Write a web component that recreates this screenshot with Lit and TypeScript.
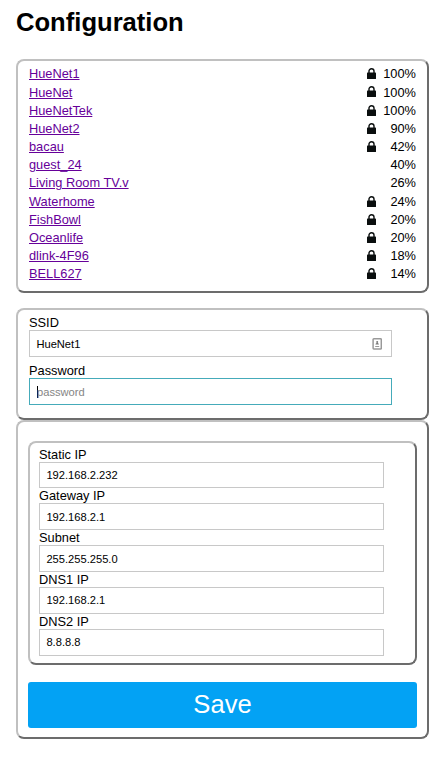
import { LitElement, html, css, svg, nothing } from "lit";
import { customElement } from "lit/decorators.js";

interface Network {
  ssid: string;
  quality: number;
  locked: boolean;
}

const networks: Network[] = [
  { ssid: "HueNet1", quality: 100, locked: true },
  { ssid: "HueNet", quality: 100, locked: true },
  { ssid: "HueNetTek", quality: 100, locked: true },
  { ssid: "HueNet2", quality: 90, locked: true },
  { ssid: "bacau", quality: 42, locked: true },
  { ssid: "guest_24", quality: 40, locked: false },
  { ssid: "Living Room TV.v", quality: 26, locked: false },
  { ssid: "Waterhome", quality: 24, locked: true },
  { ssid: "FishBowl", quality: 20, locked: true },
  { ssid: "Oceanlife", quality: 20, locked: true },
  { ssid: "dlink-4F96", quality: 18, locked: true },
  { ssid: "BELL627", quality: 14, locked: true },
];

const addresses: [string, string][] = [
  ["Static IP", "192.168.2.232"],
  ["Gateway IP", "192.168.2.1"],
  ["Subnet", "255.255.255.0"],
  ["DNS1 IP", "192.168.2.1"],
  ["DNS2 IP", "8.8.8.8"],
];

const lockIcon = html`<svg class="lock" viewBox="0 0 9 11" width="9" height="11">
  ${svg`<path d="M2 5.5V3.1a2.5 2.4 0 0 1 5 0V5.5" fill="none" stroke="#0a0e0e" stroke-width="1.4"/>
  <rect x="0" y="4.6" width="9" height="6.4" rx="0.6" fill="#0a0e0e"/>`}
</svg>`;

const contactIcon = html`<svg class="contact" viewBox="0 0 10 12" width="10" height="12">
  ${svg`<rect x="1.1" y="0.75" width="8.2" height="10.3" rx="0.7" fill="none" stroke="#999" stroke-width="1.5"/>
  <circle cx="5.2" cy="4" r="1" fill="#777"/>
  <path d="M3.5 6.6c0-2 3.4-2 3.4 0z" fill="#777"/>
  <path d="M3.2 8.5h4" stroke="#999" stroke-width="1"/>`}
</svg>`;

@customElement("app-root")
export class AppRoot extends LitElement {
  static styles = css`
    :host {
      display: block;
      box-sizing: border-box;
      min-height: 758px;
      padding: 7px 16px 19px;
      background: #fff;
      color: #000;
      font: 12.8px "Liberation Sans", Arial, sans-serif;
    }
    h1 {
      margin: 0 0 22px;
      font-size: 25.6px;
      line-height: 30px;
    }
    .panel {
      box-sizing: border-box;
      border: 2px solid;
      border-color: #c0c0c0 #6c6c6c #6c6c6c #c0c0c0;
      border-radius: 8px;
      width: 413px;
    }
    .networks {
      height: 234px;
      padding: 4.42px 11px 0;
      margin-bottom: 15px;
    }
    .row {
      display: grid;
      grid-template-columns: 1fr 9px 40px;
      align-items: center;
      height: 18.18px;
      line-height: 18.2px;
    }
    .row a {
      justify-self: start;
      color: #660099;
      text-decoration: underline;
    }
    .quality {
      grid-column: 3;
      text-align: right;
    }
    .lock {
      display: block;
      margin-bottom: 1.4px;
    }
    .wifi {
      height: 112px;
      padding: 5px 11px 0;
    }
    label {
      display: block;
      line-height: 15px;
    }
    .field {
      box-sizing: border-box;
      display: flex;
      align-items: center;
      justify-content: space-between;
      border: 1px solid #c8c8c8;
      padding: 0 9px 0 6.4px;
      font-size: 11.15px;
      color: #000;
    }
    .wifi .field {
      width: 363px;
      height: 27px;
      margin-bottom: 6px;
    }
    .wifi .focused {
      padding-left: 7px;
      border-color: #45abba;
      color: #858585;
    }
    .caret {
      width: 1px;
      height: 12px;
      margin-right: -1px;
      background: #000;
    }
    .focused span {
      flex: 1;
    }
    .setup {
      height: 319px;
      padding: 19px 10px 0;
    }
    .setup .addresses {
      width: 389px;
      height: 224px;
      padding: 3.5px 9px 0;
      margin-bottom: 17px;
    }
    .addresses .field {
      width: 345px;
      height: 26.85px;
    }
    button {
      display: block;
      width: 389px;
      height: 46px;
      border: 0;
      border-radius: 3px;
      padding: 0 0 2px;
      background: #03a2f4;
      color: #fff;
      font: 25.6px/44px "Liberation Sans", Arial, sans-serif;
    }
  `;

  render() {
    return html`
      <h1>Configuration</h1>
      <section class="panel networks">
        ${networks.map(
          (n) => html`<div class="row">
            <a>${n.ssid}</a>${n.locked ? lockIcon : nothing}<span class="quality">${n.quality}%</span>
          </div>`,
        )}
      </section>
      <section class="panel wifi">
        <label>SSID</label>
        <div class="field"><span>HueNet1</span>${contactIcon}</div>
        <label>Password</label>
        <div class="field focused"><i class="caret"></i><span>password</span></div>
      </section>
      <section class="panel setup">
        <div class="panel addresses">
          ${addresses.map(
            ([name, value]) => html`<label>${name}</label>
              <div class="field"><span>${value}</span></div>`,
          )}
        </div>
        <button>Save</button>
      </section>
    `;
  }
}
